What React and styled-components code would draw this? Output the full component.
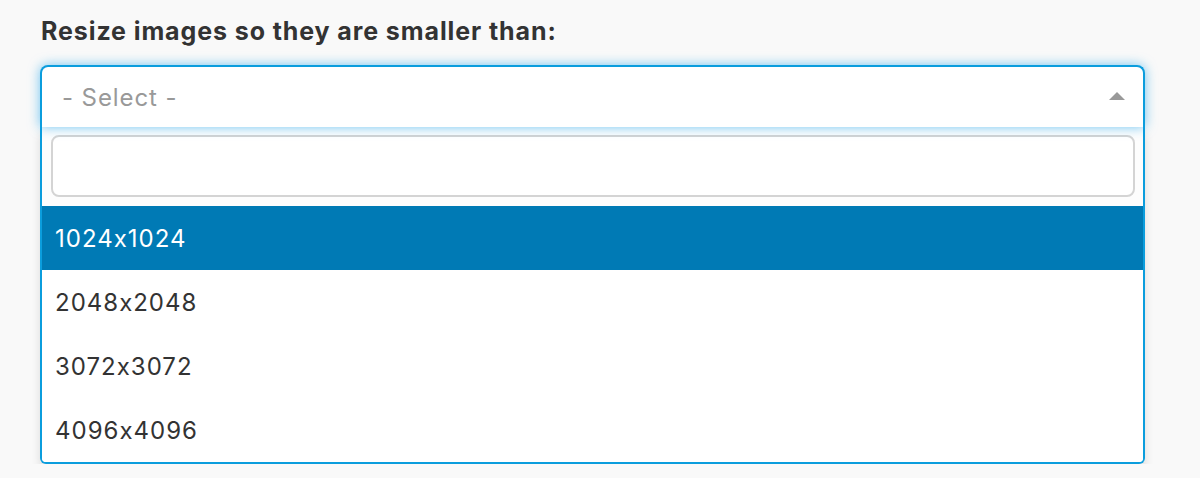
import styled, { createGlobalStyle } from "styled-components";

const options = ["1024x1024", "2048x2048", "3072x3072", "4096x4096"];

export default function App() {
  return (
    <>
      <GlobalStyle />
      <Page>
        <Label>Resize images so they are smaller than:</Label>
        <Select>
          <Selection>
            <Placeholder>- Select -</Placeholder>
            <Arrow />
          </Selection>
          <Dropdown>
            <SearchWrap>
              <Search type="text" />
            </SearchWrap>
            <List>
              {options.map((o, i) => (
                <Option key={o} $active={i === 0}>
                  {o}
                </Option>
              ))}
            </List>
          </Dropdown>
        </Select>
      </Page>
    </>
  );
}

/* === styles === */
const GlobalStyle = createGlobalStyle`
  html, body {
    margin: 0;
    background: #f9f9f9;
    font-family: Inter, "Noto Sans", "Liberation Sans", sans-serif;
  }
`;

const Page = styled.div`
  padding: 16px 55px 0 40px;
`;

const Label = styled.div`
  font-size: 25px;
  font-weight: 700;
  color: #333;
  line-height: 30px;
  letter-spacing: 0.9px;
  margin: 0 0 19px 1px;
`;

const Select = styled.div`
  display: flex;
  flex-direction: column;
`;

const Selection = styled.div`
  display: flex;
  align-items: center;
  justify-content: space-between;
  height: 60px;
  padding: 0 18px 0 20px;
  background: #fff;
  border: 2px solid #0b9ddd;
  border-bottom: none;
  border-radius: 8px 8px 0 0;
  box-shadow: 0 0 12px rgba(20, 160, 235, 0.6);
  position: relative;
  z-index: 1;
`;

const Placeholder = styled.span`
  font-size: 24px;
  color: #999;
  letter-spacing: 0.9px;
`;

const Arrow = styled.span`
  width: 0;
  height: 0;
  border-left: 8px solid transparent;
  border-right: 8px solid transparent;
  border-bottom: 8px solid #999;
  margin-top: -2px;
`;

const Dropdown = styled.div`
  background: #fff;
  border: 2px solid #0b9ddd;
  border-top: none;
  border-radius: 0 0 6px 6px;
  box-shadow: 0 6px 10px rgba(0, 0, 0, 0.12);
  overflow: hidden;
`;

const SearchWrap = styled.div`
  padding: 8px 8px 9px 9px;
  background: #fdfdfd;
`;

const Search = styled.input`
  display: block;
  box-sizing: border-box;
  width: 100%;
  height: 62px;
  border: 2px solid #d4d4d4;
  border-radius: 8px;
  background: #fff;
  outline: none;
  font: inherit;
  font-size: 22px;
`;

const List = styled.div`
  display: flex;
  flex-direction: column;
`;

const Option = styled.div`
  height: 64px;
  display: flex;
  align-items: center;
  padding-left: 13px;
  font-size: 24px;
  letter-spacing: 1px;
  color: ${({ $active }) => ($active ? "#fff" : "#333")};
  background: ${({ $active }) => ($active ? "#007ab5" : "#fff")};
`;
